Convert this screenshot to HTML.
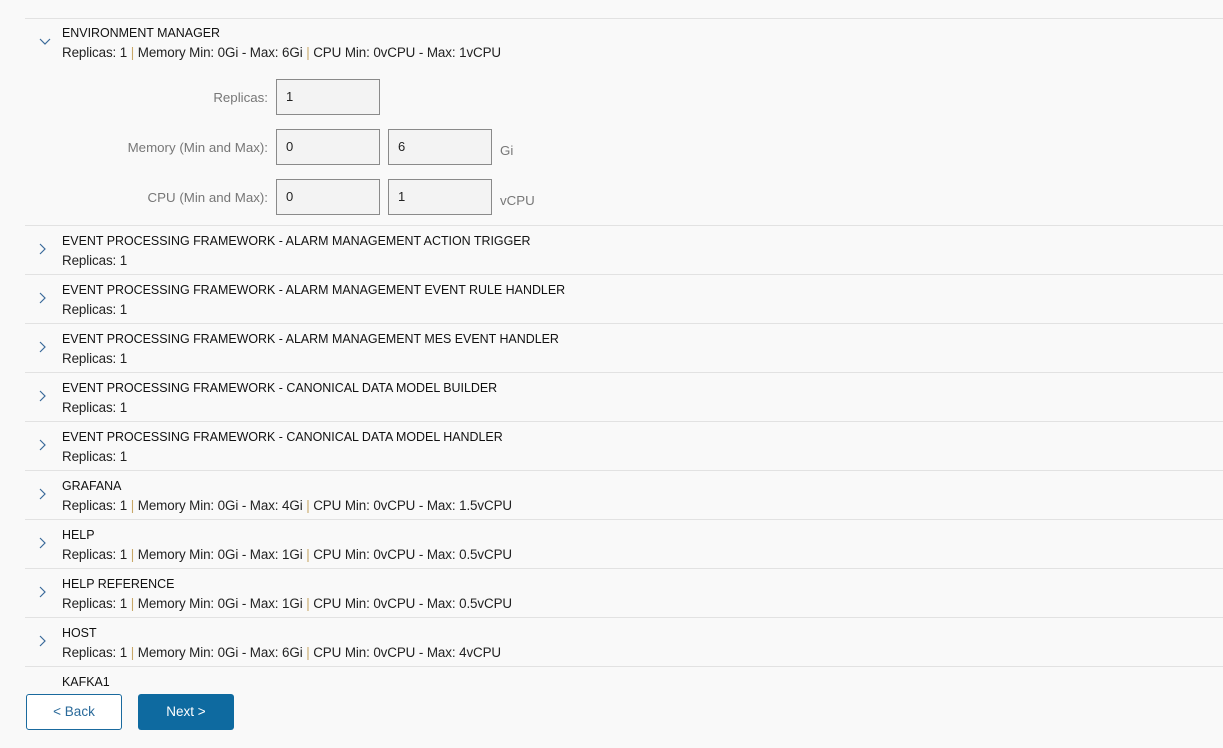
<!DOCTYPE html>
<html><head><style>
body{margin:0;width:1223px;height:748px;background:#f9f9f9;font-family:"Liberation Sans",sans-serif;color:#222;position:relative;overflow:hidden}
.abs{position:absolute}
.line{position:absolute;left:25px;right:0;height:1px;background:#e2e2e2}
.t{position:absolute;left:62px;font-size:12.45px;color:#111;letter-spacing:0px}
.s{position:absolute;left:62px;font-size:13.4px;color:#222;letter-spacing:-0.1px}
.s b{color:#c8a868;font-weight:normal}
.lbl{position:absolute;font-size:13.3px;color:#777;text-align:right;width:200px}
.in{position:absolute;border:1px solid #8a8a8a;background:#f3f3f3;font-size:13px;box-sizing:border-box;padding-left:9px;width:104px;height:36px;line-height:34px}
.chev{position:absolute;left:39px}
</style></head><body>
<div class="line" style="top:18px"></div>
<svg class="chev" style="top:38px" width="12" height="8"><path d="M1 1 L6 6 L11 1" fill="none" stroke="#3a6a9a" stroke-width="1.2"/></svg>
<div class="t" style="top:26px">ENVIRONMENT MANAGER</div>
<div class="s" style="top:45px">Replicas: 1 <b>|</b> Memory Min: 0Gi - Max: 6Gi <b>|</b> CPU Min: 0vCPU - Max: 1vCPU</div>
<div class="lbl" style="left:68px;top:90px">Replicas:</div>
<div class="in" style="left:276px;top:79px">1</div>
<div class="lbl" style="left:68px;top:140px">Memory (Min and Max):</div>
<div class="in" style="left:276px;top:129px">0</div>
<div class="in" style="left:388px;top:129px">6</div>
<div class="abs" style="left:500px;top:143px;font-size:13.3px;color:#777">Gi</div>
<div class="lbl" style="left:68px;top:190px">CPU (Min and Max):</div>
<div class="in" style="left:276px;top:179px">0</div>
<div class="in" style="left:388px;top:179px">1</div>
<div class="abs" style="left:500px;top:193px;font-size:13.3px;color:#777">vCPU</div>

<div class="line" style="top:225px"></div>
<svg class="chev" style="top:243px" width="8" height="12"><path d="M1 1 L6 6 L1 11" fill="none" stroke="#3a6a9a" stroke-width="1.2"/></svg>
<div class="t" style="top:234px">EVENT PROCESSING FRAMEWORK - ALARM MANAGEMENT ACTION TRIGGER</div>
<div class="s" style="top:253px">Replicas: 1</div>

<div class="line" style="top:274px"></div>
<svg class="chev" style="top:292px" width="8" height="12"><path d="M1 1 L6 6 L1 11" fill="none" stroke="#3a6a9a" stroke-width="1.2"/></svg>
<div class="t" style="top:283px">EVENT PROCESSING FRAMEWORK - ALARM MANAGEMENT EVENT RULE HANDLER</div>
<div class="s" style="top:302px">Replicas: 1</div>

<div class="line" style="top:323px"></div>
<svg class="chev" style="top:341px" width="8" height="12"><path d="M1 1 L6 6 L1 11" fill="none" stroke="#3a6a9a" stroke-width="1.2"/></svg>
<div class="t" style="top:332px">EVENT PROCESSING FRAMEWORK - ALARM MANAGEMENT MES EVENT HANDLER</div>
<div class="s" style="top:351px">Replicas: 1</div>

<div class="line" style="top:372px"></div>
<svg class="chev" style="top:390px" width="8" height="12"><path d="M1 1 L6 6 L1 11" fill="none" stroke="#3a6a9a" stroke-width="1.2"/></svg>
<div class="t" style="top:381px">EVENT PROCESSING FRAMEWORK - CANONICAL DATA MODEL BUILDER</div>
<div class="s" style="top:400px">Replicas: 1</div>

<div class="line" style="top:421px"></div>
<svg class="chev" style="top:439px" width="8" height="12"><path d="M1 1 L6 6 L1 11" fill="none" stroke="#3a6a9a" stroke-width="1.2"/></svg>
<div class="t" style="top:430px">EVENT PROCESSING FRAMEWORK - CANONICAL DATA MODEL HANDLER</div>
<div class="s" style="top:449px">Replicas: 1</div>

<div class="line" style="top:470px"></div>
<svg class="chev" style="top:488px" width="8" height="12"><path d="M1 1 L6 6 L1 11" fill="none" stroke="#3a6a9a" stroke-width="1.2"/></svg>
<div class="t" style="top:479px">GRAFANA</div>
<div class="s" style="top:498px">Replicas: 1 <b>|</b> Memory Min: 0Gi - Max: 4Gi <b>|</b> CPU Min: 0vCPU - Max: 1.5vCPU</div>

<div class="line" style="top:519px"></div>
<svg class="chev" style="top:537px" width="8" height="12"><path d="M1 1 L6 6 L1 11" fill="none" stroke="#3a6a9a" stroke-width="1.2"/></svg>
<div class="t" style="top:528px">HELP</div>
<div class="s" style="top:547px">Replicas: 1 <b>|</b> Memory Min: 0Gi - Max: 1Gi <b>|</b> CPU Min: 0vCPU - Max: 0.5vCPU</div>

<div class="line" style="top:568px"></div>
<svg class="chev" style="top:586px" width="8" height="12"><path d="M1 1 L6 6 L1 11" fill="none" stroke="#3a6a9a" stroke-width="1.2"/></svg>
<div class="t" style="top:577px">HELP REFERENCE</div>
<div class="s" style="top:596px">Replicas: 1 <b>|</b> Memory Min: 0Gi - Max: 1Gi <b>|</b> CPU Min: 0vCPU - Max: 0.5vCPU</div>

<div class="line" style="top:617px"></div>
<svg class="chev" style="top:635px" width="8" height="12"><path d="M1 1 L6 6 L1 11" fill="none" stroke="#3a6a9a" stroke-width="1.2"/></svg>
<div class="t" style="top:626px">HOST</div>
<div class="s" style="top:645px">Replicas: 1 <b>|</b> Memory Min: 0Gi - Max: 6Gi <b>|</b> CPU Min: 0vCPU - Max: 4vCPU</div>

<div class="line" style="top:666px"></div>
<div class="t" style="top:675px">KAFKA1</div>
<div class="abs" style="left:0;top:690px;width:1223px;height:58px;background:#f9f9f9"></div>

<div class="abs" style="left:26px;top:694px;width:96px;height:36px;box-sizing:border-box;border:1px solid #1a6a9e;border-radius:3px;background:#fff;color:#2a6a9a;font-size:13.5px;text-align:center;line-height:34px">&lt; Back</div>
<div class="abs" style="left:138px;top:694px;width:96px;height:36px;border-radius:3px;background:#0e6aa0;color:#fff;font-size:13.5px;text-align:center;line-height:36px">Next &gt;</div>
</body></html>
